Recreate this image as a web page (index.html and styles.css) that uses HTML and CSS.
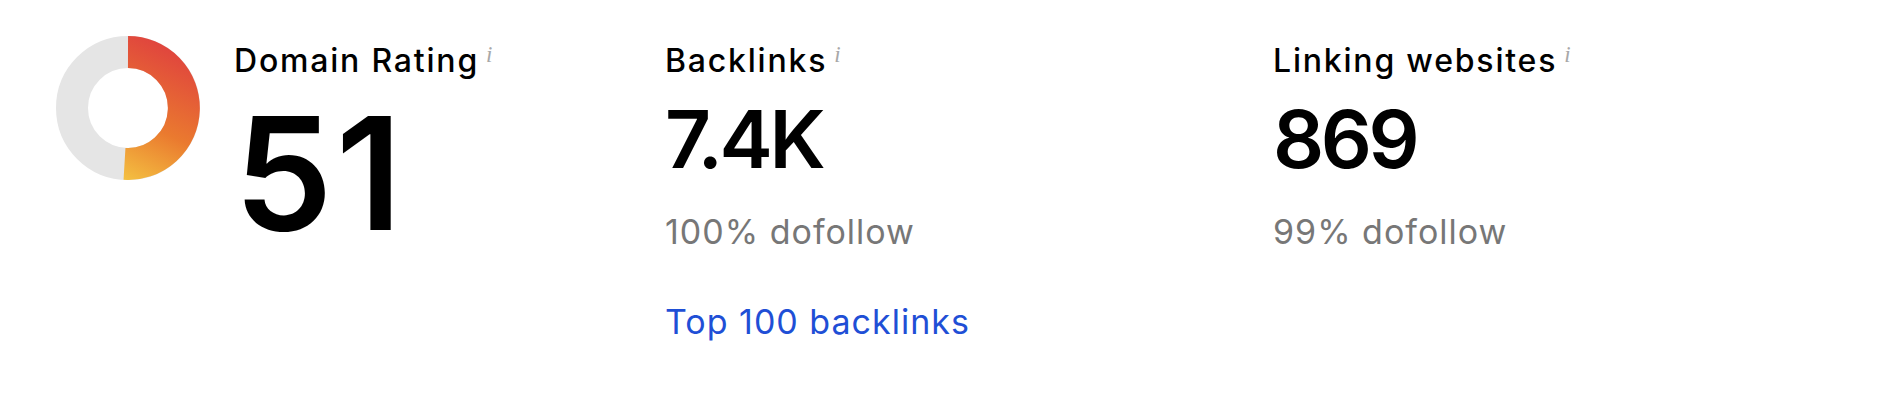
FILE: index.html
```html
<!DOCTYPE html>
<html>

<head>
    <link rel="stylesheet" href="styles.css">
</head>

<body>
    <div class="stats">
        <div class="stat stat-dr">
            <svg class="donut" width="144" height="144" viewBox="0 0 144 144">
                <defs>
                    <linearGradient id="drGradient" gradientUnits="userSpaceOnUse" x1="110" y1="0" x2="40" y2="144">
                        <stop offset="0" stop-color="#df3f3f"/>
                        <stop offset="0.55" stop-color="#ea7a2f"/>
                        <stop offset="1" stop-color="#f6cf45"/>
                    </linearGradient>
                </defs>
                <circle cx="72" cy="72" r="56" fill="none" stroke="#e5e5e5" stroke-width="32"/>
                <path d="M72 16 A56 56 0 1 1 68.5 127.9" fill="none" stroke="url(#drGradient)" stroke-width="32"/>
            </svg>
            <div class="stat-body">
                <div class="stat-title">Domain Rating<span class="info">i</span></div>
                <div class="stat-value big">51</div>
            </div>
        </div>

        <div class="stat">
            <div class="stat-body">
                <div class="stat-title">Backlinks<span class="info">i</span></div>
                <div class="stat-value">7.4K</div>
                <div class="stat-sub">100% dofollow</div>
                <a class="stat-link" href="#">Top 100 backlinks</a>
            </div>
        </div>

        <div class="stat">
            <div class="stat-body">
                <div class="stat-title">Linking websites<span class="info">i</span></div>
                <div class="stat-value">869</div>
                <div class="stat-sub">99% dofollow</div>
            </div>
        </div>
    </div>
</body>

</html>
```

FILE: styles.css
```css
body {
    margin: 0;
    background: #ffffff;
    font-family: Inter, "Liberation Sans", sans-serif;
    color: #000000;
}

.stats {
    display: grid;
    grid-template-columns: 609px 608px 1fr;
    padding: 36px 0 0 56px;
}

.stat {
    display: flex;
    align-items: flex-start;
    gap: 34px;
}

.donut {
    flex: none;
    display: block;
}

.stat-body {
    display: flex;
    flex-direction: column;
    align-items: flex-start;
    margin-top: -1px;
}

.stat-title {
    font-size: 32px;
    line-height: 40px;
    font-weight: 500;
    letter-spacing: 1.8px;
    white-space: nowrap;
}

.info {
    font-family: "Liberation Serif", serif;
    font-style: italic;
    font-size: 23px;
    letter-spacing: 0;
    color: #a8a8a8;
    margin-left: 7px;
    vertical-align: 10px;
}

.stat-value {
    margin-top: 18px;
    font-size: 80px;
    line-height: 80px;
    font-weight: 600;
    letter-spacing: -3.5px;
}

.stat-value.big {
    margin-top: 14px;
    font-size: 157px;
    line-height: 157px;
    letter-spacing: 3px;
}

.stat-sub {
    margin-top: 33px;
    font-size: 34px;
    line-height: 40px;
    letter-spacing: 1px;
    color: #777777;
}

.stat-link {
    margin-top: 50px;
    font-size: 34px;
    line-height: 40px;
    letter-spacing: 1px;
    color: #1f4fd6;
    text-decoration: none;
}
```
